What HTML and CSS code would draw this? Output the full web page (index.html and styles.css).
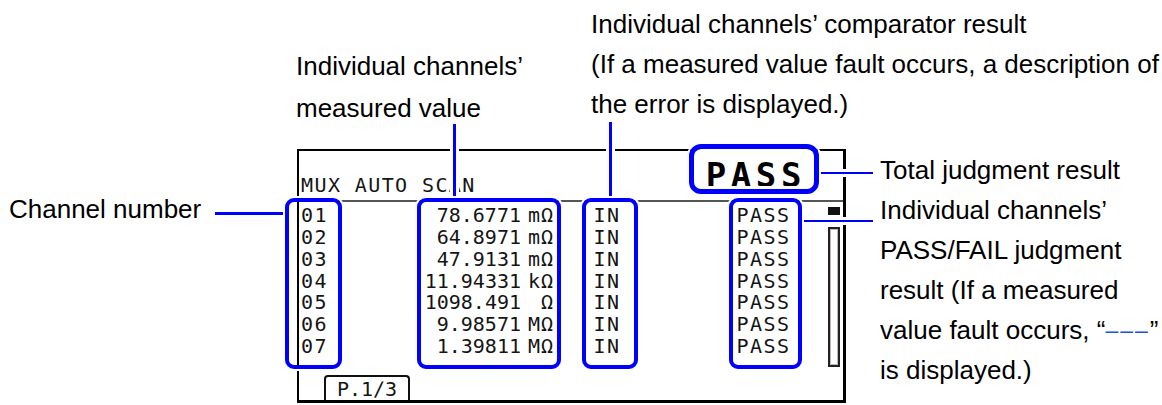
FILE: index.html
```html
<!DOCTYPE html>
<html lang="en">
<head>
<meta charset="utf-8">
<title>MUX AUTO SCAN screen</title>
<link rel="stylesheet" href="styles.css">
</head>
<body>
<div class="canvas">
  <div class="screen">
    <div class="hdr">
      <span class="hdr-title">MUX AUTO SCAN</span>
      <span class="hdr-pass">PASS</span>
    </div>
    <div class="body">
      <div class="table">
        <span class="ch">01</span><span class="val"><span class="num">78.6771</span><span class="unit">mΩ</span></span><span class="cmp">IN</span><span class="jd">PASS</span>
        <span class="ch">02</span><span class="val"><span class="num">64.8971</span><span class="unit">mΩ</span></span><span class="cmp">IN</span><span class="jd">PASS</span>
        <span class="ch">03</span><span class="val"><span class="num">47.9131</span><span class="unit">mΩ</span></span><span class="cmp">IN</span><span class="jd">PASS</span>
        <span class="ch">04</span><span class="val"><span class="num">11.94331</span><span class="unit">kΩ</span></span><span class="cmp">IN</span><span class="jd">PASS</span>
        <span class="ch">05</span><span class="val"><span class="num">1098.491</span><span class="unit">Ω</span></span><span class="cmp">IN</span><span class="jd">PASS</span>
        <span class="ch">06</span><span class="val"><span class="num">9.98571</span><span class="unit">MΩ</span></span><span class="cmp">IN</span><span class="jd">PASS</span>
        <span class="ch">07</span><span class="val"><span class="num">1.39811</span><span class="unit">MΩ</span></span><span class="cmp">IN</span><span class="jd">PASS</span>
      </div>
      <div class="scroll"><div class="thumb"></div><div class="track"></div></div>
    </div>
    <div class="tab">P.1∕3</div>
  </div>

  <div class="label label-cmp">Individual channels’ comparator result<br>(If a measured value fault occurs, a description of<br>the error is displayed.)</div>
  <div class="label label-val">Individual channels’<br>measured value</div>
  <div class="label label-ch">Channel number</div>
  <div class="label label-total">Total judgment result</div>
  <div class="label label-judge">Individual channels’<br>PASS/FAIL judgment<br>result (If a measured<br>value fault occurs, “<span class="dash">–––</span>”<br>is displayed.)</div>

  <div class="ln v-val"></div>
  <div class="ln v-cmp"></div>
  <div class="ln h-ch"></div>
  <div class="ln h-total"></div>
  <div class="ln h-judge"></div>

  <div class="bx bx-ch"></div>
  <div class="bx bx-val"></div>
  <div class="bx bx-cmp"></div>
  <div class="bx bx-judge"></div>
  <div class="bx bx-total"></div>
</div>
</body>
</html>
```

FILE: styles.css
```css
* { box-sizing: border-box; margin: 0; padding: 0; }

html, body {
  width: 1162px;
  height: 405px;
  background: #fff;
  overflow: hidden;
}

body {
  font-family: "Liberation Sans", Arial, sans-serif;
  color: #000;
}

.canvas {
  position: relative;
  width: 1162px;
  height: 405px;
  padding: 149px 0 0 297px;
}

/* ---------- LCD screen ---------- */
.screen {
  width: 549px;
  height: 254px;
  border: 2px solid #000;
  border-right-width: 3px;
  border-bottom-width: 3px;
  display: flex;
  flex-direction: column;
  font-family: "DejaVu Sans Mono", "Liberation Mono", monospace;
  font-size: 20px;
  color: #151515;
}

.hdr {
  height: 51px;
  border-bottom: 2px solid #555;
  display: flex;
  align-items: flex-start;
  padding-left: 2px;
}

.hdr-title {
  margin-top: 22.5px;
  line-height: 22px;
  letter-spacing: 1.4px;
}

.hdr-pass {
  margin-left: auto;
  margin-right: 37px;
  margin-top: 6.5px;
  font-size: 34px;
  font-weight: bold;
  line-height: 34px;
  letter-spacing: 4.6px;
  color: #000;
}

.body {
  display: flex;
  padding-left: 2px;
}

.table {
  display: grid;
  grid-template-columns: 40px 212px 183.5px 70px;
  grid-auto-rows: 21.8px;
  line-height: 21.8px;
  padding-top: 3.3px;
}

.ch, .cmp, .jd { letter-spacing: 1.5px; }
.cmp { padding-left: 40.5px; }

.val {
  display: flex;
  justify-content: flex-end;
}
.num { letter-spacing: 0; }
.unit {
  width: 33px;
  text-align: right;
  letter-spacing: 1px;
  margin-right: -1px;
}

.scroll {
  margin-left: auto;
  margin-right: 3px;
  width: 12px;
  padding-top: 5px;
}
.thumb { height: 8px; background: #111; }
.track {
  margin-top: 12px;
  height: 140px;
  border: 2px solid #222;
  box-shadow: inset 0 0 0 1px #bbb;
}

.tab {
  margin-top: auto;
  margin-left: 25px;
  width: 86px;
  height: 25px;
  border: 2px solid #111;
  border-bottom: none;
  border-radius: 4px 4px 0 0;
  text-align: center;
  line-height: 21px;
  padding-top: 2px;
}

/* ---------- callout labels ---------- */
.label {
  position: absolute;
  font-size: 26px;
  line-height: 40px;
  white-space: nowrap;
}
.label-cmp { left: 591px; top: 4px; }
.label-val { left: 296px; top: 45px; line-height: 42px; }
.label-ch { left: 9px; top: 189px; }
.label-total { left: 880px; top: 150px; }
.label-judge { left: 880px; top: 190px; }
.dash {
  color: #2050e0;
  font-size: 23px;
  letter-spacing: 2px;
  vertical-align: 1px;
}

/* ---------- leader lines ---------- */
.ln {
  position: absolute;
  background: #0000ff;
  box-shadow: 0 0 0 3px #fff;
}
.v-val { left: 453px; top: 124px; width: 3px; height: 74px; }
.v-cmp { left: 609px; top: 122px; width: 3px; height: 76px; }
.h-ch { left: 215px; top: 212px; width: 70px; height: 3px; }
.h-total { left: 819px; top: 172px; width: 54px; height: 2px; }
.h-judge { left: 802px; top: 220px; width: 71px; height: 2px; }

/* ---------- highlight boxes ---------- */
.bx {
  position: absolute;
  border: 4px solid #0000ff;
  border-radius: 9px;
  box-shadow: 0 0 0 2px #fff;
}
.bx-ch { left: 285px; top: 198px; width: 57px; height: 171px; }
.bx-val { left: 417px; top: 198px; width: 144px; height: 171px; }
.bx-cmp { left: 582px; top: 198px; width: 56px; height: 171px; }
.bx-judge { left: 729px; top: 198px; width: 73px; height: 171px; }
.bx-total {
  left: 689px;
  top: 144px;
  width: 130px;
  height: 50px;
  border-width: 5px;
  border-radius: 12px;
  box-shadow: 0 0 0 2px #fff, inset 0 0 0 3px #fff;
}
```
